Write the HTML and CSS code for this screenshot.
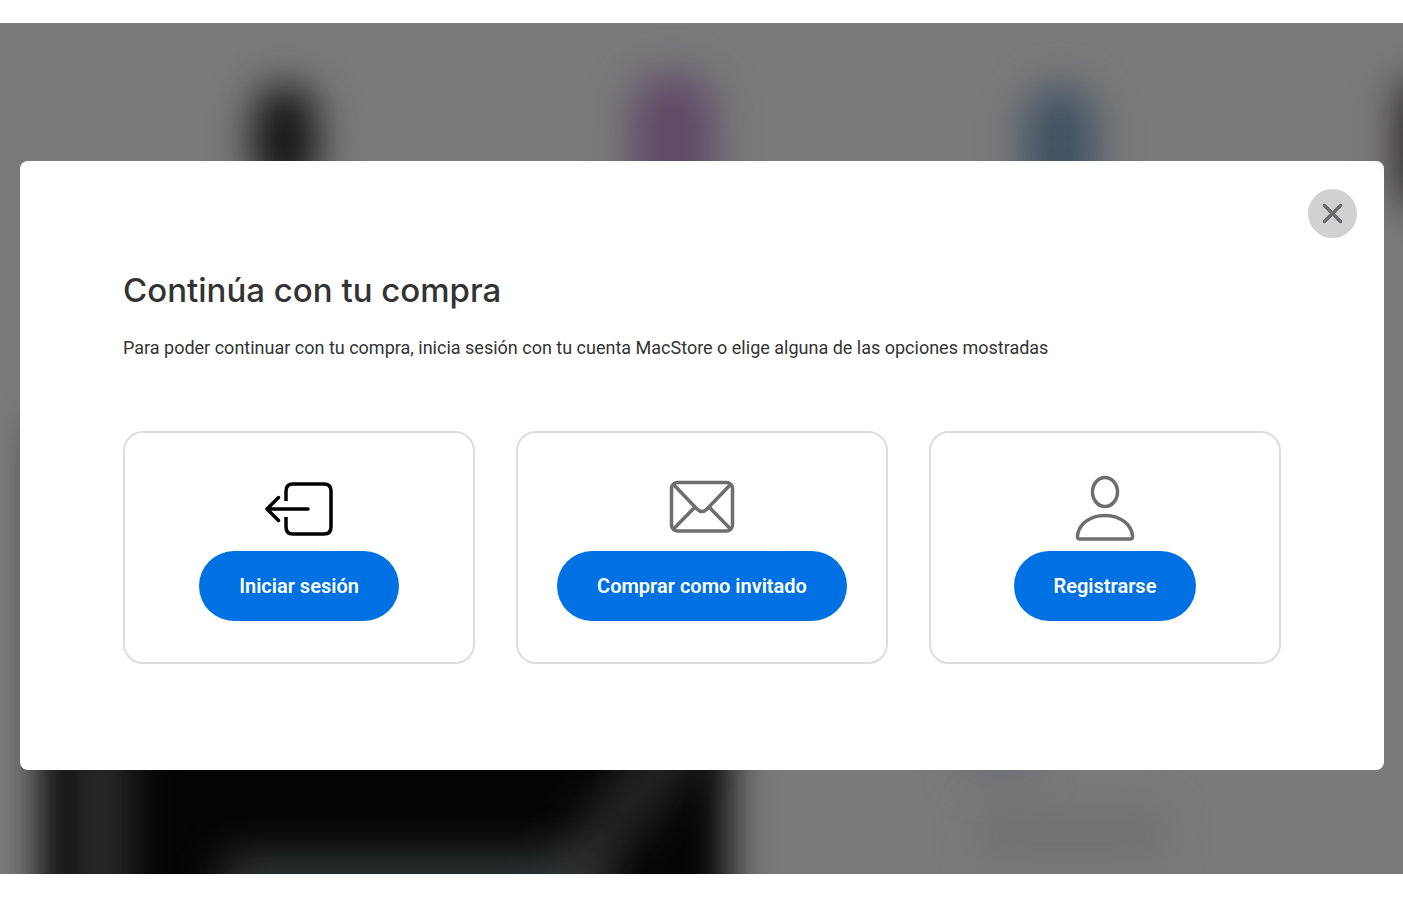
FILE: index.html
```html
<!DOCTYPE html>
<html lang="es">
  <head>
    <meta charset="UTF-8" />
    <meta name="viewport" content="width=device-width, initial-scale=1.0" />
    <title>Continúa con tu compra</title>
    <link rel="stylesheet" href="styles.css">
  </head>
  <body>
    <div class="page">
      <!-- Blurred store behind the dialog -->
      <div class="backdrop" aria-hidden="true">
        <div class="blob phone-black"></div>
        <div class="blob phone-purple"></div>
        <div class="blob phone-blue"></div>
        <div class="blob phone-edge"></div>
        <div class="blob banner"></div>
        <div class="blob banner-left"></div>
        <div class="blob banner-shine"></div>
        <div class="blob banner-glow"></div>
        <div class="blob link-spot"></div>
        <div class="blob text-spot"></div>
      </div>

      <main class="modal" role="dialog" aria-labelledby="modalTitle">
        <div class="modal-header">
          <button class="close" type="button" aria-label="Cerrar">
            <svg width="25" height="25" viewBox="0 0 25 25">
              <path d="M4.500 4.500L20.500 20.500M20.500 4.500L4.500 20.500" />
            </svg>
          </button>
        </div>

        <div class="modal-body">
          <h1 id="modalTitle">Continúa con tu compra</h1>
          <p>Para poder continuar con tu compra, inicia sesión con tu cuenta MacStore o elige alguna de las opciones mostradas</p>

          <div class="options">
            <div class="option">
              <svg class="icon icon-black" viewBox="0 0 72 72">
                <path class="cut" d="M23 28V18Q23 11 30 11H61Q68 11 68 18V54Q68 61 61 61H30Q23 61 23 54V44" />
                <path d="M45 36H4M15.500 24.500L4 36L15.500 47.500" />
              </svg>
              <button class="btn" type="button">Iniciar sesión</button>
            </div>
            <div class="option">
              <svg class="icon" viewBox="0 0 72 72">
                <rect x="5.500" y="9.500" width="61" height="48.500" rx="6" />
                <path d="M7.500 11.500L31 36Q36 41 41 36L64.500 11.500M7.500 56L28.500 34.500M64.500 56L43.500 34.500" />
              </svg>
              <button class="btn" type="button">Comprar como invitado</button>
            </div>
            <div class="option">
              <svg class="icon" viewBox="0 0 72 72">
                <ellipse cx="36" cy="19" rx="12.500" ry="14.500" />
                <path d="M10.500 66Q8 66 8.500 62.500C10 51 21 42.500 36 42.500S62 51 63.500 62.500Q64 66 61.500 66Z" />
              </svg>
              <button class="btn" type="button">Registrarse</button>
            </div>
          </div>
        </div>
      </main>
    </div>
  </body>
</html>
```
FILE: styles.css
```css
/* General Styles */
* {
  box-sizing: border-box;
}

body {
  margin: 0;
  background: white;
  font-family: Inter, "Liberation Sans", sans-serif;
  color: #333333;
}

.page {
  position: relative;
  min-height: calc(100vh - 46px);
  margin: 23px 0;
  padding: 138px 19px 104px 20px;
  overflow: hidden;
  background: #7a7a7a;
}

/* Backdrop */
.backdrop {
  position: absolute;
  inset: 0;
  overflow: hidden;
}

.blob {
  position: absolute;
  filter: blur(20px);
}

.phone-black {
  left: 18%;
  top: 62px;
  width: 64px;
  height: 110px;
  border-radius: 32px;
  background: #141414;
}

.phone-purple {
  left: 45%;
  top: 50px;
  width: 84px;
  height: 150px;
  border-radius: 36px;
  background: #5f4a68;
}

.phone-blue {
  left: 73%;
  top: 62px;
  width: 72px;
  height: 140px;
  border-radius: 36px;
  background: #405264;
}

.phone-edge {
  right: -50px;
  top: 60px;
  width: 54px;
  height: 120px;
  background: #2c2228;
}

.banner {
  left: 3%;
  width: 49%;
  top: 400px;
  bottom: -60px;
  background: #050506;
}

.banner-left {
  left: 5%;
  width: 60px;
  top: 700px;
  bottom: -60px;
  background: #2a2a2c;
}

.banner-shine {
  left: 43%;
  width: 52px;
  top: 670px;
  bottom: -40px;
  background: #262626;
  transform: rotate(38deg);
}

.banner-glow {
  left: 16%;
  width: 27%;
  height: 70px;
  bottom: -50px;
  background: #303436;
}

.link-spot {
  left: 69%;
  width: 64px;
  height: 40px;
  top: 714px;
  background: #676c73;
}

.text-spot {
  left: 70%;
  width: 180px;
  height: 50px;
  top: 785px;
  background: #707070;
}

/* Modal */
.modal {
  position: relative;
  padding: 28px 27px 106px;
  border-radius: 8px;
  background: white;
}

.modal-header {
  display: flex;
  justify-content: flex-end;
}

.close {
  display: flex;
  align-items: center;
  justify-content: center;
  width: 49px;
  height: 49px;
  padding: 0;
  border: none;
  border-radius: 50%;
  background: #d1d1d1;
  cursor: pointer;
}

.close svg {
  fill: none;
  stroke: #6a6a6e;
  stroke-width: 3.5;
  stroke-linecap: round;
}

.modal-body {
  padding: 32px 76px 0;
}

h1 {
  margin: 0 0 26px;
  font-size: 33px;
  line-height: 40px;
  font-weight: 500;
}

p {
  margin: 0 0 71px;
  font-family: Roboto, "Liberation Sans", sans-serif;
  font-size: 18px;
  line-height: 24px;
}

/* Options */
.options {
  display: flex;
  gap: 41px;
}

.option {
  display: flex;
  flex: 1;
  flex-direction: column;
  align-items: center;
  padding: 40px 39px 41px;
  border: 2px solid #dddddd;
  border-radius: 20px;
}

.icon {
  width: 72px;
  height: 72px;
  margin-bottom: 6px;
  fill: none;
  stroke: #6e6e6e;
  stroke-width: 3.5;
  stroke-linecap: round;
  stroke-linejoin: round;
}

.icon-black {
  stroke: #000000;
}

.cut {
  stroke-linecap: butt;
}

.btn {
  height: 70px;
  padding: 0 40px;
  border: none;
  border-radius: 35px;
  background: #0071e3;
  color: white;
  font-family: Roboto, "Liberation Sans", sans-serif;
  font-size: 20px;
  font-weight: 600;
  white-space: nowrap;
  cursor: pointer;
}

.btn:hover {
  background: #0077ed;
}
```
